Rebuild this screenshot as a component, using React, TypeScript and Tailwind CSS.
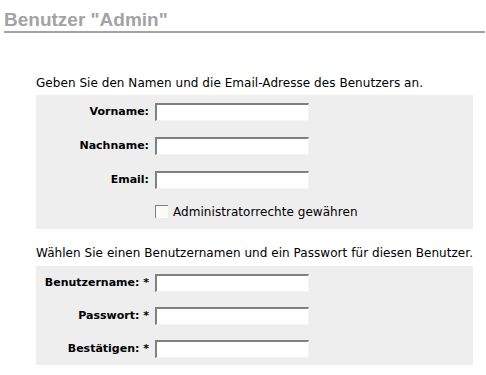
const Field = ({ label }: { label: string }) => {
    return (
        <div className="flex items-center h-[18px]">
            <label className="w-[113px] text-right text-[11px] font-bold text-black tracking-normal whitespace-nowrap">{label}</label>
            <input
                type="text"
                className="ml-[6px] w-[154px] h-[18px] bg-white border-t-2 border-l-2 border-r border-b border-t-[#808080] border-l-[#808080] border-r-[#f4f4ee] border-b-[#f4f4ee] outline-none"
            />
        </div>
    )
}

export default function App() {
    return (
        <div className="w-[486px] h-[375px] bg-white text-[12px] leading-[14px] tracking-[0.05px] text-black overflow-hidden" style={{ fontFamily: '"DejaVu Sans", Verdana, sans-serif' }}>
            {/* Title */}
            <h1
                className="ml-[4px] mr-[1px] mt-[9px] h-[24px] leading-[22px] text-[19px] font-bold tracking-normal text-[#a3a3a6] border-b-2 border-[#a3a3a6]"
                style={{ fontFamily: '"Liberation Sans", Arial, sans-serif' }}
            >
                Benutzer "Admin"
            </h1>

            <div className="ml-[36px] w-[437px]">
                {/* Persönliche Daten */}
                <p className="mt-[43px] whitespace-nowrap">Geben Sie den Namen und die Email-Adresse des Benutzers an.</p>
                <div className="mt-[5px] bg-[#eeeeee] pt-[8px] pb-[11px] flex flex-col gap-[16px]">
                    <Field label="Vorname:" />
                    <Field label="Nachname:" />
                    <Field label="Email:" />
                    <div className="flex items-center h-[13px] ml-[119px]">
                        <span className="w-[13px] h-[13px] bg-[#fbfbf8] border-t border-l border-[#808080] border-r-[#eeeeee] border-b-[#eeeeee]"></span>
                        <span className="ml-[5px]">Administratorrechte gewähren</span>
                    </div>
                </div>

                {/* Zugangsdaten */}
                <p className="mt-[17px] whitespace-nowrap">Wählen Sie einen Benutzernamen und ein Passwort für diesen Benutzer.</p>
                <div className="mt-[6px] bg-[#eeeeee] pt-[8px] pb-[7px] flex flex-col gap-[15px]">
                    <Field label="Benutzername: *" />
                    <Field label="Passwort: *" />
                    <Field label="Bestätigen: *" />
                </div>
            </div>
        </div>
    )
}
